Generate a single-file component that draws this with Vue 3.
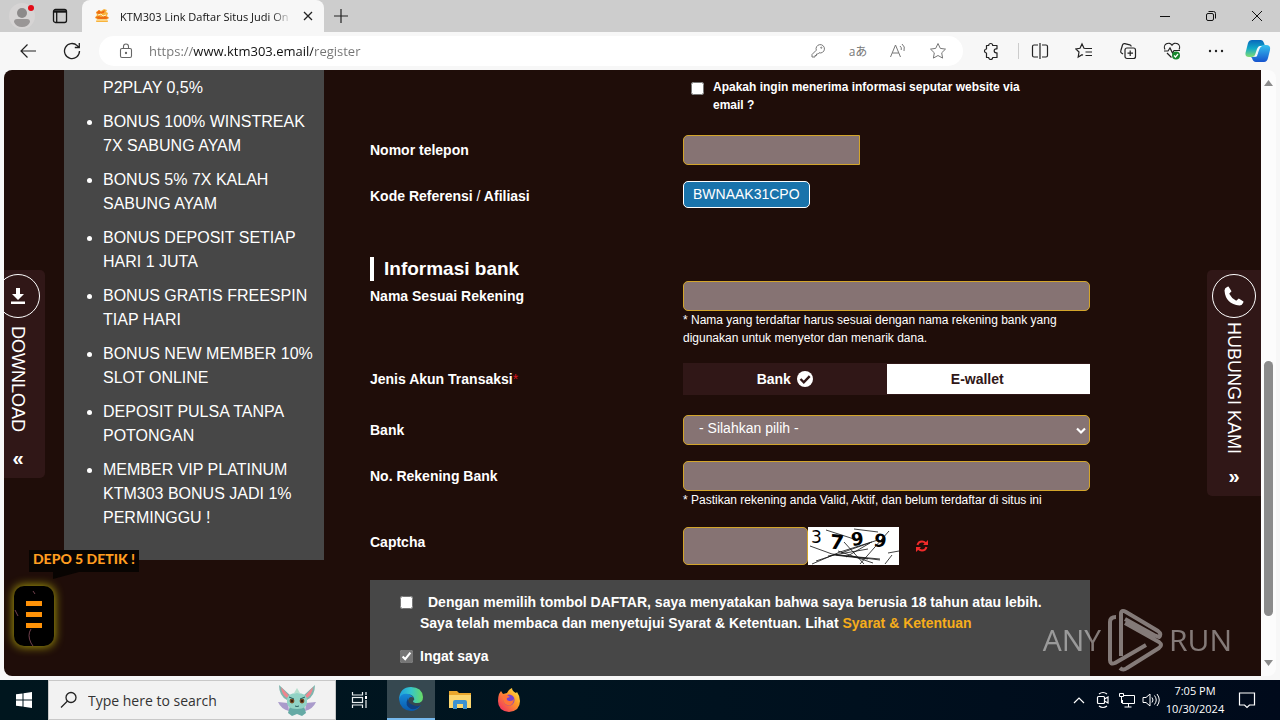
<template>
  <div class="desktop">
    <!-- Baris tab -->
    <header class="tabbar">
      <button class="plain profile" aria-label="Profile">
        <svg width="28" height="28" viewBox="0 0 28 28">
          <circle cx="14" cy="14" r="13" fill="#d6d4d4" />
          <circle cx="14" cy="11" r="5" fill="#8c8a8a" />
          <path d="M6 20q0-3 3-3h10q3 0 3 3-2 5-8 5t-8-5z" fill="#999696" />
          <circle cx="23" cy="6" r="3" fill="#e30b17" />
        </svg>
      </button>
      <button class="plain workspace" aria-label="Tab actions">
        <svg width="16" height="16" viewBox="0 0 16 16" fill="none" stroke="#161616" stroke-width="1.3">
          <rect x="1.5" y="1.5" width="13" height="13" rx="2" />
          <path d="M2 3.500h12" stroke-width="2.400" /><path d="M4.700 4v10" />
        </svg>
      </button>
      <div class="tab">
        <svg width="16" height="16" viewBox="0 0 16 16">
          <path d="M2 4l3-2 2 1 3-2 3 1-1 2 2 1-1 3 2 2-2 1 1 3H2l1-3-2-1 2-3z" fill="#f8b33c" />
          <path d="M5 2l2 2 4-2-1 3-5 1-3-1zM1 9l4-1 2 1 4-1 4 2-3 1H4z" fill="#ee6d13" />
          <path d="M4 7l3-1 2 2 3-1M3 12h10" stroke="#fff2c5" fill="none" />
        </svg>
        <span class="tab-title">KTM303 Link Daftar Situs Judi On</span>
        <button class="plain" aria-label="Close tab">
          <svg width="12" height="12" viewBox="0 0 12 12" stroke="#222" stroke-width="1.3"><path d="M2 2l8 8M10 2l-8 8" /></svg>
        </button>
      </div>
      <button class="plain newtab" aria-label="New tab">
        <svg width="14" height="14" viewBox="0 0 14 14" stroke="#222" stroke-width="1.2"><path d="M7 0v14M0 7h14" /></svg>
      </button>
      <div class="window-buttons">
        <button class="plain" aria-label="Minimize"><svg width="12" height="12" viewBox="0 0 12 12" stroke="#111"><path d="M1 6.5h10" /></svg></button>
        <button class="plain" aria-label="Restore">
          <svg width="12" height="12" viewBox="0 0 12 12" fill="none" stroke="#111"><rect x="1.5" y="3.5" width="7" height="7" rx="1.5" /><path d="M3.5 1.5h5a2 2 0 0 1 2 2v5" /></svg>
        </button>
        <button class="plain" aria-label="Close"><svg width="12" height="12" viewBox="0 0 12 12" stroke="#111"><path d="M1 1l10 10M11 1L1 11" /></svg></button>
      </div>
    </header>

    <!-- Bilah alamat -->
    <nav class="toolbar">
      <button class="plain back" aria-label="Back">
        <svg width="18" height="16" viewBox="0 0 18 16" fill="none" stroke="#222" stroke-width="1.2"><path d="M17 8H2M8.5 1.5L2 8l6.500 6.500" /></svg>
      </button>
      <button class="plain reload" aria-label="Reload">
        <svg width="18" height="18" viewBox="0 0 18 18" fill="none" stroke="#222" stroke-width="1.3"><path d="M16.500 9a7.500 7.500 0 1 1-2.300-5.400L16 5.300M16.300 1v4.500h-4.500" /></svg>
      </button>
      <div class="address">
        <svg width="14" height="16" viewBox="0 0 14 16" fill="none" stroke="#666" stroke-width="1.1">
          <rect x="1.500" y="5.500" width="11" height="9" rx="1.500" /><path d="M4.500 5.500V3.500a2.500 2.500 0 0 1 5 0v2" /><circle cx="7" cy="10" r=".6" fill="#666" />
        </svg>
        <input v-model="url" class="url" aria-label="Address" spellcheck="false" />
        <button class="plain" aria-label="Password">
          <svg width="16" height="16" viewBox="0 0 16 16" fill="none" stroke="#777"><path d="M6.300 7.200a4.200 4.200 0 1 1 2.700 2.600L7.800 11H6.500v1.500H5V14H2v-2.500z" /><circle cx="11.300" cy="4.700" r=".6" /></svg>
        </button>
        <button class="plain translate" aria-label="Translate">aあ</button>
        <button class="plain" aria-label="Read aloud">
          <svg width="18" height="16" viewBox="0 0 18 16" fill="none" stroke="#777"><path d="M1.500 14L6.500 2l5 12M3.300 10h6.500M11 3q2 1.500 1.200 4M13 1q3.500 2.500 2 7" /></svg>
        </button>
        <button class="plain" aria-label="Favorite">
          <svg width="18" height="18" viewBox="0 0 18 18" fill="none" stroke="#777" stroke-linejoin="round"><path d="M9 1.500l2.300 4.900 5.200.7-3.800 3.700.9 5.300L9 13.500l-4.600 2.600.9-5.300L1.500 7.100l5.200-.7z" /></svg>
        </button>
      </div>
      <div class="tools">
        <button class="plain" aria-label="Extensions">
          <svg width="18" height="18" viewBox="0 0 18 18" fill="none" stroke="#222" stroke-width="1.200" stroke-linejoin="round"><path d="M4.500 3.500h2.200a2 2 0 1 1 4 0H15v3.300h-.8a1.900 1.900 0 1 0 0 4h.8v4.700h-4.300a2 2 0 0 1-4 0H4.500V11a2 2 0 1 1 0-4z" /></svg>
        </button>
        <span class="divider"></span>
        <button class="plain" aria-label="Split screen">
          <svg width="18" height="18" viewBox="0 0 18 18" fill="none" stroke="#222" stroke-width="1.200"><path d="M7 3H3q-1.500 0-1.500 1.500v9Q1.500 15 3 15h4M11 3h4q1.500 0 1.500 1.500v9Q16.500 15 15 15h-4M9 1v16" /></svg>
        </button>
        <button class="plain" aria-label="Favorites">
          <svg width="18" height="18" viewBox="0 0 18 18" fill="none" stroke="#222" stroke-width="1.200"><path d="M10.500 6.500L9 6.300 7 2 5 6.300l-4.200.6L4 10l-.8 5L7 12.700l1 .6M10.500 6.500H17M10.500 10H17M10.500 13.500H17" /></svg>
        </button>
        <button class="plain" aria-label="Collections">
          <svg width="18" height="18" viewBox="0 0 18 18" fill="none" stroke="#222" stroke-width="1.200"><path d="M4 12l-1.500-1a2 2 0 0 1-.7-2.300L3.500 3a2 2 0 0 1 2.300-1.400l5 1.200a2 2 0 0 1 1.400 1.700" /><rect x="6" y="6" width="10.500" height="10.500" rx="2" /><path d="M11.200 8.500v5.500M8.500 11.200H14" /></svg>
        </button>
        <button class="plain" aria-label="Browser essentials">
          <svg width="18" height="18" viewBox="0 0 18 18" fill="none" stroke="#222" stroke-width="1.200"><path d="M2 7.500a4 4 0 0 1 7-4.300 4 4 0 0 1 7 4.300M1 9h4l2-3 2.500 5L11 8.500h6M4 11l4.500 4.500" /><circle cx="13" cy="13.500" r="4" fill="#16862d" stroke="none" /><path d="M11 13.500l1.500 1.500 2.500-3" stroke="#fff" /></svg>
        </button>
        <button class="plain" aria-label="Settings and more">
          <svg width="18" height="18" viewBox="0 0 18 18" fill="#222"><circle cx="3" cy="9" r="1.200" /><circle cx="9" cy="9" r="1.200" /><circle cx="15" cy="9" r="1.200" /></svg>
        </button>
      </div>
      <button class="plain copilot" aria-label="Copilot">
        <svg width="26" height="24" viewBox="0 0 26 24">
          <defs>
            <linearGradient id="cpa" x2="0" y2="1"><stop stop-color="#0868bc" /><stop offset=".5" stop-color="#12a9c7" /><stop offset="1" stop-color="#82dc72" /></linearGradient>
            <linearGradient id="cpb" x2="0" y2="1"><stop stop-color="#35c1ee" /><stop offset="1" stop-color="#1654ce" /></linearGradient>
          </defs>
          <path d="M7 1h9q2 0 3 3l1 3h-5q-2 0-3 3l-2 6q-1 2-3 2H4q-5 0-3-6l2-8q1-3 4-3z" fill="url(#cpa)" />
          <path d="M19 6h2q5 0 4 5l-2 8q-1 4-4 4h-8q-3 0-4-4l-1-1h3q2 0 3-3l2-6q1-3 5-3z" fill="url(#cpb)" />
          <path d="M15 7h2q-2 1-3 4l-2 6q0 1-3 1 2-1 3-4l1-4q1-3 2-3z" fill="#f3fbff" />
        </svg>
      </button>
    </nav>

    <!-- Halaman web -->
    <div class="viewport">
      <div class="page">
        <aside class="promo">
          <ul>
            <li v-for="(item, i) in promos" :key="item" :class="{ continued: i === 0 }">{{ item }}</li>
          </ul>
        </aside>

        <form class="register" @submit.prevent>
          <div class="row newsletter">
            <label class="news-label">
              <input v-model="newsletter" type="checkbox" />
              <span>Apakah ingin menerima informasi seputar website via email ?</span>
            </label>
          </div>
          <div class="row">
            <label class="name" for="phone">Nomor telepon</label>
            <input id="phone" v-model="phone" class="field phone" type="tel" />
          </div>
          <div class="row">
            <span class="name">Kode Referensi <i>/</i> Afiliasi</span>
            <span class="referral">BWNAAK31CPO</span>
          </div>

          <h2>Informasi bank</h2>
          <div class="row">
            <label class="name" for="owner">Nama Sesuai Rekening</label>
            <div>
              <input id="owner" v-model="owner" class="field" type="text" />
              <p class="hint">* Nama yang terdaftar harus sesuai dengan nama rekening bank yang digunakan untuk menyetor dan menarik dana.</p>
            </div>
          </div>
          <div class="row account-row">
            <span class="name">Jenis Akun Transaksi<b class="required">*</b></span>
            <div class="types">
              <button
                v-for="t in types"
                :key="t"
                type="button"
                :class="{ active: t === accountType }"
                :aria-pressed="t === accountType"
                @click="accountType = t"
              >
                {{ t }}
                <svg width="16" height="16" viewBox="0 0 16 16"><circle cx="8" cy="8" r="8" fill="#fff" /><path d="M3.500 8l3.300 3.300L12.700 5.200" fill="none" stroke="#301717" stroke-width="2.400" /></svg>
              </button>
            </div>
          </div>
          <div class="row">
            <label class="name" for="bank">Bank</label>
            <div class="select-wrap">
              <select id="bank" v-model="bank" class="field">
                <option value="">- Silahkan pilih -</option>
              </select>
              <svg width="10" height="8" viewBox="0 0 10 8" fill="none" stroke="#fff" stroke-width="2.200"><path d="M1 1.500l4 4 4-4" /></svg>
            </div>
          </div>
          <div class="row">
            <label class="name" for="rekening">No. Rekening Bank</label>
            <div>
              <input id="rekening" v-model="rekening" class="field" type="text" />
              <p class="hint">* Pastikan rekening anda Valid, Aktif, dan belum terdaftar di situs ini</p>
            </div>
          </div>
          <div class="row captcha-row">
            <label class="name" for="captcha">Captcha</label>
            <div class="captcha">
              <input id="captcha" v-model="captcha" class="field" type="text" />
              <svg width="91" height="38" viewBox="0 0 91 38" class="captcha-img">
                <rect width="91" height="38" fill="#fff" />
                <text x="3" y="16" font-size="17">3</text>
                <text x="22" y="22" font-size="20" font-weight="bold" transform="rotate(5 28 16)">7</text>
                <text x="43" y="18" font-size="18" font-weight="bold" transform="rotate(-8 50 12)">9</text>
                <text x="66" y="20" font-size="18" font-weight="bold" transform="rotate(10 73 14)">9</text>
                <path d="M2 19l22 8 48 6M4 37l28-12 38-12M18 3l28 9M46 2l24 3M36 15l20 22M28 28l44 4M33 26l31-11M52 37l29-33M20 29l40-7M30 24l35 12M38 30l24-14M80 26l11-2M77 37l7-9M8 34l18-6 34 4" fill="none" stroke="#111" stroke-width=".8" />
              </svg>
              <button type="button" class="plain refresh" aria-label="Refresh captcha">
                <svg width="12" height="12" viewBox="0 0 12 12" fill="none" stroke="#f02a2a" stroke-width="2"><path d="M1.500 5q1-3.500 4.500-3.500 2 0 3.700 1.800M10.500 7q-1 3.500-4.500 3.500-2 0-3.700-1.800" /><path d="M12 0v5H7zM0 12V7h5z" fill="#f02a2a" stroke="none" /></svg>
              </button>
            </div>
          </div>

          <div class="terms">
            <label>
              <input v-model="agree" type="checkbox" />
              <span class="agree-text">Dengan memilih tombol DAFTAR, saya menyatakan bahwa saya berusia 18 tahun atau lebih.<br />Saya telah membaca dan menyetujui Syarat &amp; Ketentuan. Lihat <a href="#syarat">Syarat &amp; Ketentuan</a></span>
            </label>
            <label>
              <input v-model="remember" type="checkbox" />
              <span>Ingat saya</span>
            </label>
          </div>
        </form>

        <!-- Tab samping -->
        <button class="side-tab download">
          <span class="ring"><svg width="14" height="16" viewBox="0 0 14 16" fill="#fff"><path d="M5 0h4v6h4L7 12 1 6h4zM0 13.500h14V16H0z" /></svg></span>
          <span class="vertical">DOWNLOAD</span>
          <span class="chevrons">«</span>
        </button>
        <button class="side-tab contact">
          <span class="ring"><svg width="20" height="20" viewBox="0 0 20 20" fill="#fff"><path d="M.5 4.500Q.5 2 3.500.8l1-.3 3 4.800-2.300 2.500q2.300 4.500 7 7L14.800 12.500l4.700 3-.3 1.200Q18 19.500 15.500 19.500 1.500 18 .5 4.500z" /></svg></span>
          <span class="vertical">HUBUNGI KAMI</span>
          <span class="chevrons">»</span>
        </button>

        <span class="depo">DEPO 5 DETIK !</span>
        <button class="float-menu" aria-label="Menu">
          <svg width="40" height="60" viewBox="0 0 40 60">
            <path d="M12 15h16v5H12zM12 26h16v5H12zM12 37h16v5H12z" fill="#ff9208" />
            <path d="M17 43q-4 6 0 14l2 3M1 24l3 6M19 5l2 3" fill="none" stroke="#8d5160" stroke-width=".8" />
          </svg>
        </button>
      </div>

      <div class="scrollbar">
        <svg width="9" height="6" viewBox="0 0 9 6" fill="#8b8b8b"><path d="M0 6l4.500-6L9 6z" /></svg>
        <div class="track"><div class="thumb"></div></div>
        <svg width="9" height="6" viewBox="0 0 9 6" fill="#8b8b8b"><path d="M0 0l4.500 6L9 0z" /></svg>
      </div>
    </div>

    <!-- Taskbar -->
    <footer class="taskbar">
      <button class="plain start" aria-label="Start">
        <svg width="16" height="16" viewBox="0 0 16 16" fill="#fff"><path d="M0 2.300L6.500 1.400V7.500H0zM7.500 1.200L16 0v7.500H7.500zM0 8.500h6.500v6.100L0 13.700zM7.500 8.500H16V16l-8.500-1.200z" /></svg>
      </button>
      <label class="search">
        <svg width="18" height="18" viewBox="0 0 18 18" fill="none" stroke="#222" stroke-width="1.300"><circle cx="11" cy="6.500" r="5" /><path d="M7.500 10L1 16.500" /></svg>
        <input type="text" placeholder="Type here to search" aria-label="Type here to search" />
        <svg width="40" height="32" viewBox="0 0 40 32">
          <path d="M11 19L1 18q3 7 11 9zM29 19l10-1q-3 7-11 9z" fill="#aa9bcb" />
          <path d="M14 12L2 1q0 11 8 15zM26 12L38 1q0 11-8 15z" fill="#7fb5ae" />
          <path d="M12 12L4 3q1 8 6 11zM28 12l8-9q-1 8-6 11z" fill="#ef858e" />
          <path d="M13 22h14l2 7-4 3-5-2-5 2-4-3z" fill="#65aaa5" />
          <path d="M10 16q0-7 10-7t10 7q1 9-10 9T10 16z" fill="#92d3c5" />
          <path d="M20 4l3 5h-6z" fill="#b7e0ce" />
          <circle cx="15" cy="17" r="2.400" fill="#744921" /><circle cx="25" cy="17" r="2.400" fill="#744921" />
          <circle cx="15" cy="17" r="1" fill="#23150e" /><circle cx="25" cy="17" r="1" fill="#23150e" />
          <path d="M12 13l5 2M28 13l-5 2M18 22q2 1 4 0" fill="none" stroke="#275f62" />
        </svg>
      </label>
      <button class="plain app" aria-label="Task View">
        <svg width="18" height="18" viewBox="0 0 18 18" fill="none" stroke="#e8eef0" stroke-width="1.200"><path d="M1.500 1v3h10V1M1.500 17v-3h10v3M15 1v3M15 9v8" /><rect x="1.500" y="6.500" width="10" height="5" /><path d="M14 5h2v3h-2z" fill="#fff" stroke="none" /></svg>
      </button>
      <button class="plain app current" aria-label="Microsoft Edge">
        <svg width="24" height="24" viewBox="0 0 24 24">
          <defs>
            <linearGradient id="eda"><stop stop-color="#1c9fe0" /><stop offset=".5" stop-color="#36c6ca" /><stop offset="1" stop-color="#69db63" /></linearGradient>
            <linearGradient id="edb" x2="0" y2="1"><stop stop-color="#1689d7" /><stop offset="1" stop-color="#0959ac" /></linearGradient>
          </defs>
          <path d="M0 12Q1 0 12 0t12 10q0 6-6 6-4 0-4-2 2-1 1-3-2-5-8-3-5 2-7 4z" fill="url(#eda)" />
          <path d="M0 12q2-6 9-5 4 1 6 4-3-2-5 0-3 5 2 8 5 3 10-1-4 6-10 6Q1 23 0 12z" fill="url(#edb)" />
          <path d="M9 11q-4 8 3 11 6 1 10-4-4 2-8 0-6-2-5-7z" fill="#103f80" />
        </svg>
      </button>
      <button class="plain app" aria-label="File Explorer">
        <svg width="22" height="20" viewBox="0 0 22 20"><path d="M0 1h8l2 2h12v15H0z" fill="#e9a72d" /><path d="M0 5h22v13H0z" fill="#fbd66f" /><path d="M4 19v-7q0-2 2-2h10q2 0 2 2v7h-4v-5H8v5z" fill="#3c91d1" /></svg>
      </button>
      <button class="plain app" aria-label="Firefox">
        <svg width="24" height="24" viewBox="0 0 24 24">
          <defs><linearGradient id="ffx" x1="1" y1="0" x2="0" y2="1"><stop stop-color="#fff44f" /><stop offset=".4" stop-color="#ff9b27" /><stop offset="1" stop-color="#ef206b" /></linearGradient></defs>
          <path d="M2 6l2-3 2 3 4-1q2-4 5-5 0 3 4 5l1-1q3 4 3 9 0 10-11 11Q1 23 1 13q0-4 1-7z" fill="url(#ffx)" />
          <circle cx="12" cy="12" r="5.500" fill="#7743cf" />
          <path d="M6 7q4-1 7 2l-3 1q-1 3 3 3 3 0 4-2-1 8-7 6-5-2-4-10z" fill="#ff7438" />
        </svg>
      </button>

      <div class="tray">
        <button class="plain" aria-label="Show hidden icons"><svg width="12" height="8" viewBox="0 0 12 8" fill="none" stroke="#fff" stroke-width="1.200"><path d="M1 7l5-5 5 5" /></svg></button>
        <button class="plain" aria-label="Meet Now"><svg width="14" height="18" viewBox="0 0 14 18" fill="none" stroke="#fff" stroke-width="1.200"><rect x="1.500" y="5.500" width="7" height="7" rx="1" /><path d="M8.500 8L12 6v6L8.500 10M3 3q4-3 8 0M3 15q4 3 8 0" /></svg></button>
        <button class="plain" aria-label="Network"><svg width="16" height="16" viewBox="0 0 16 16" fill="none" stroke="#fff"><path d="M5 3.500h10.500v8H3.500V8M9.500 12v3M5.500 15h7M.5 1.500h4v3h-4zM2.500 5v6" /></svg></button>
        <button class="plain" aria-label="Volume"><svg width="18" height="16" viewBox="0 0 18 16" fill="none" stroke="#fff"><path d="M1 5.500h3L8 2v12l-4-3.500H1zM10 5.500q2 2.500 0 5M12.500 3.500q3.500 4.500 0 9M15 2q4.500 6 0 12" /></svg></button>
      </div>
      <div class="clock"><span>7:05 PM</span><span>10/30/2024</span></div>
      <button class="plain notice" aria-label="Notifications"><svg width="18" height="18" viewBox="0 0 18 18" fill="none" stroke="#fff" stroke-width="1.200"><path d="M1.500 2h15v12h-5L9 16.500 6.500 14h-5z" /></svg></button>
    </footer>

    <div class="watermark">
      <span>ANY</span>
      <svg width="56" height="64" viewBox="0 0 56 64" fill="none" stroke="#fff" stroke-width="4" stroke-linejoin="round">
        <path d="M9 9Q3 9 3 14v38q0 5 5 3l31-18M14 48V6q0-5 5-2l32 19q4 3 1 6l-5-2-29-16M13 60q3 3 7 0l32-20q4-3 0-6L18 15" />
      </svg>
      <span>RUN</span>
    </div>
  </div>
</template>

<script setup>
import { ref } from 'vue'

const url = ref('https://www.ktm303.email/register')
const newsletter = ref(false)
const phone = ref('')
const owner = ref('')
const bank = ref('')
const rekening = ref('')
const captcha = ref('')
const agree = ref(false)
const remember = ref(true)

const types = ['Bank', 'E-wallet']
const accountType = ref('Bank')

const promos = [
  'P2PLAY 0,5%',
  'BONUS 100% WINSTREAK 7X SABUNG AYAM',
  'BONUS 5% 7X KALAH SABUNG AYAM',
  'BONUS DEPOSIT SETIAP HARI 1 JUTA',
  'BONUS GRATIS FREESPIN TIAP HARI',
  'BONUS NEW MEMBER 10% SLOT ONLINE',
  'DEPOSIT PULSA TANPA POTONGAN',
  'MEMBER VIP PLATINUM KTM303 BONUS JADI 1% PERMINGGU !',
]
</script>

<style>
body { margin: 0; overflow: hidden; }
</style>

<style scoped>
* { box-sizing: border-box; }
.desktop {
  position: relative;
  display: flex;
  flex-direction: column;
  height: 100vh;
  background: #f7f7f7;
  font-family: "Open Sans", "Noto Sans CJK JP", sans-serif;
}
svg { display: block; flex-shrink: 0; }
button, input, select { font: inherit; margin: 0; }
.plain {
  display: flex;
  align-items: center;
  justify-content: center;
  padding: 0;
  border: 0;
  background: none;
  flex-shrink: 0;
}

/* baris tab */
.tabbar { display: flex; align-items: stretch; height: 32px; flex-shrink: 0; background: #cdcdcd; }
.profile { width: 44px; }
.workspace { width: 32px; margin-right: 6px; }
.tab {
  display: flex;
  align-items: center;
  gap: 10px;
  width: 242px;
  padding: 0 10px 0 12px;
  background: #f7f7f7;
  border-radius: 8px 8px 0 0;
}
.tab-title {
  flex: 1;
  white-space: nowrap;
  font-size: 11px;
  color: #111;
  mask-image: linear-gradient(90deg, #000 88%, transparent);
}
.newtab { width: 34px; }
.window-buttons { display: flex; margin-left: auto; }
.window-buttons .plain { width: 46px; }

/* bilah alamat */
.toolbar { display: flex; align-items: center; height: 38px; flex-shrink: 0; padding: 0 9px 0 19px; }
.back { width: 18px; }
.reload { width: 18px; margin: 0 18px 0 26px; }
.address {
  display: flex;
  align-items: center;
  gap: 22px;
  flex: 1;
  height: 30px;
  padding: 0 16px 0 20px;
  border-radius: 15px;
  background: #fff;
}
.address .plain { width: 18px; }
.url {
  flex: 1;
  min-width: 0;
  margin-left: -6px;
  padding: 0;
  border: 0;
  outline: 0;
  font-size: 13px;
  color: transparent;
  /* protokol dan path abu-abu, domain hitam */
  background: linear-gradient(90deg, #737373 44px, #111 44px, #111 164px, #737373 164px);
  background-clip: text;
}
.translate { font-size: 12px; color: #777; white-space: nowrap; }
.tools { display: flex; align-items: center; gap: 26px; margin: 0 20px 0 19px; }
.divider { width: 1px; height: 16px; margin: 0 -14px 0 -8px; background: #ccc; }

/* halaman */
.viewport {
  display: flex;
  flex: 1;
  min-height: 0;
  margin: 0 4px 4px;
  border-radius: 8px;
  overflow: hidden;
}
.page {
  position: relative;
  display: flex;
  align-items: flex-start;
  gap: 46px;
  flex: 1;
  min-width: 0;
  padding: 0 171px 0 60px;
  overflow: hidden;
  background: #1f0d09;
  color: #fff;
  font-family: "Liberation Sans", Arial, sans-serif;
}
.promo { width: 260px; flex-shrink: 0; padding: 6px 10px 30px 39px; background: #474747; }
.promo ul { display: flex; flex-direction: column; gap: 10px; margin: 0; padding: 0; }
.promo li { font-size: 16px; line-height: 24px; }
.promo .continued { list-style: none; }

.register { flex: 1; min-width: 0; padding-top: 8px; }
.row { display: grid; grid-template-columns: 313px 1fr; align-items: start; margin-bottom: 16px; }
.name { font-size: 14px; font-weight: bold; line-height: 30px; }
.name i { font-style: normal; font-weight: normal; }
.required { color: #d9141b; font-weight: normal; }
.newsletter { margin-bottom: 21px; }
.news-label {
  grid-column: 2;
  display: flex;
  gap: 9px;
  padding: 0 60px 0 8px;
  font-size: 12px;
  font-weight: bold;
  line-height: 18px;
}
input[type="checkbox"] { width: 13px; height: 13px; margin: 4px 0 0; flex-shrink: 0; accent-color: #767676; }
.field {
  display: block;
  width: 100%;
  height: 30px;
  padding: 0 15px;
  border: 1px solid #d3a52b;
  border-radius: 5px;
  outline: 0;
  background: #867373;
  color: #fff;
  font-size: 14px;
}
.phone { width: 177px; border-radius: 5px 0 0 5px; }
.referral {
  justify-self: start;
  padding: 0 9px;
  border: 1px solid #fff;
  border-radius: 5px;
  background: #1973ab;
  font-size: 14px;
  line-height: 25px;
}
h2 {
  margin: 46px 0 0;
  padding-left: 10px;
  border-left: 4px solid #fff;
  font-size: 19px;
  line-height: 24px;
}
.hint { margin: 0; font-size: 12px; line-height: 18px; }
.account-row { align-items: center; margin-bottom: 20px; }
.types { display: flex; align-items: center; height: 32px; background: #301717; }
.types button {
  display: flex;
  align-items: center;
  justify-content: center;
  gap: 6px;
  flex: 1;
  height: 30px;
  padding: 0;
  border: 0;
  background: #fff;
  color: #301717;
  font-size: 14px;
  font-weight: bold;
}
.types button svg { visibility: hidden; }
.types .active { background: #301717; color: #fff; }
.types .active svg { visibility: visible; }
.select-wrap { position: relative; }
.select-wrap select { appearance: none; padding-bottom: 4px; }
.select-wrap svg { position: absolute; right: 4px; top: 12px; }
.captcha-row { margin: 18px 0 15px; }
.captcha { display: flex; align-items: center; }
.captcha .field { width: 125px; height: 38px; }
.captcha-img { overflow: visible; font-family: "DejaVu Sans", sans-serif; }
.refresh { margin-left: 17px; }
.terms {
  display: flex;
  flex-direction: column;
  gap: 12px;
  padding: 12px 0 40px 30px;
  background: #474747;
  font-size: 14px;
  font-weight: bold;
  line-height: 21px;
}
.terms label { display: flex; gap: 7px; }
.agree-text { text-indent: 8px; }
.terms a { color: #f6ad1b; text-decoration: none; }

/* tab samping */
.side-tab {
  position: absolute;
  top: 200px;
  display: flex;
  flex-direction: column;
  align-items: center;
  width: 54px;
  padding: 4px 0 8px;
  border: 0;
  background: #301717;
  color: #fff;
}
.download { left: -13px; gap: 8px; border-radius: 0 5px 5px 0; }
.contact { right: 0; gap: 4px; border-radius: 5px 0 0 5px; }
.ring {
  display: flex;
  align-items: center;
  justify-content: center;
  width: 44px;
  height: 44px;
  border: 1px solid #fff;
  border-radius: 50%;
}
.vertical { writing-mode: vertical-rl; font-size: 18px; line-height: 20px; }
.chevrons { margin-top: 6px; font-size: 20px; font-weight: bold; line-height: 24px; }

.depo {
  position: absolute;
  left: 25px;
  top: 480px;
  width: 110px;
  padding-bottom: 4px;
  background: #080402;
  color: #ff9d20;
  font-family: "Lato", sans-serif;
  font-size: 14px;
  font-weight: 900;
  line-height: 18px;
  text-align: center;
  white-space: nowrap;
}
.depo::after {
  content: "";
  position: absolute;
  left: 24px;
  top: 100%;
  border-top: 7px solid #080402;
  border-right: 26px solid transparent;
}
.float-menu {
  position: absolute;
  left: 10px;
  top: 516px;
  padding: 0;
  border: 0;
  border-radius: 10px;
  background: #000;
  box-shadow: 0 0 10px 1px #a49a0c;
}

.scrollbar {
  display: flex;
  flex-direction: column;
  align-items: center;
  width: 15px;
  padding: 10px 0;
  background: #fcfcfc;
}
.track { flex: 1; width: 9px; padding: 275px 0 44px; }
.thumb { height: 100%; border-radius: 5px; background: #8b8b8b; }

/* taskbar */
.taskbar {
  display: flex;
  height: 40px;
  flex-shrink: 0;
  background: linear-gradient(90deg, #00161e, #001420 45%, #000a1b);
  color: #fff;
}
.start { width: 48px; }
.search {
  display: flex;
  align-items: center;
  gap: 10px;
  width: 288px;
  padding: 0 18px 0 11px;
  border: 1px solid #c8c8c8;
  background: #f2f2f2;
}
.search input { flex: 1; min-width: 0; padding: 0; border: 0; outline: 0; background: none; font-size: 14px; }
.search input::placeholder { color: #333; opacity: 1; }
.app { width: 48px; margin-right: 1px; }
.app.current { margin-left: 2px; background: #364850; border-bottom: 2px solid #76b9ed; }
.tray { display: flex; gap: 6px; margin-left: auto; }
.tray .plain { width: 18px; }
.clock {
  display: flex;
  flex-direction: column;
  align-items: center;
  justify-content: center;
  width: 70px;
  font-size: 11px;
  line-height: 18px;
}
.notice { width: 34px; margin-right: 16px; }

.watermark {
  position: absolute;
  right: 48px;
  bottom: 48px;
  display: flex;
  align-items: center;
  gap: 6px;
  opacity: 0.45;
  color: #fff;
  font-size: 30px;
  line-height: 40px;
  pointer-events: none;
}
</style>
